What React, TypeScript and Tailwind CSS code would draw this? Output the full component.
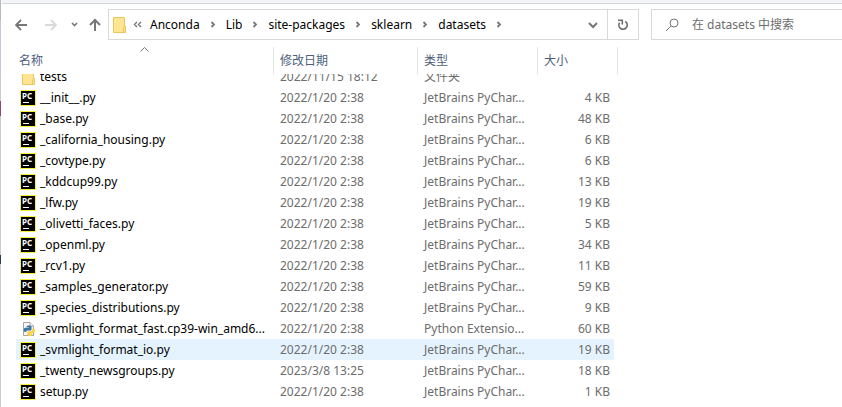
import React from "react";

type FileRow = { name: string; date: string; type: string; size: string; kind: "pc" | "py" };

const PC = "JetBrains PyChar...";
const D = "2022/1/20 2:38";

const rows: FileRow[] = [
  { name: "__init__.py", date: D, type: PC, size: "4 KB", kind: "pc" },
  { name: "_base.py", date: D, type: PC, size: "48 KB", kind: "pc" },
  { name: "_california_housing.py", date: D, type: PC, size: "6 KB", kind: "pc" },
  { name: "_covtype.py", date: D, type: PC, size: "6 KB", kind: "pc" },
  { name: "_kddcup99.py", date: D, type: PC, size: "13 KB", kind: "pc" },
  { name: "_lfw.py", date: D, type: PC, size: "19 KB", kind: "pc" },
  { name: "_olivetti_faces.py", date: D, type: PC, size: "5 KB", kind: "pc" },
  { name: "_openml.py", date: D, type: PC, size: "34 KB", kind: "pc" },
  { name: "_rcv1.py", date: D, type: PC, size: "11 KB", kind: "pc" },
  { name: "_samples_generator.py", date: D, type: PC, size: "59 KB", kind: "pc" },
  { name: "_species_distributions.py", date: D, type: PC, size: "9 KB", kind: "pc" },
  { name: "_svmlight_format_fast.cp39-win_amd6...", date: D, type: "Python Extensio...", size: "60 KB", kind: "py" },
  { name: "_svmlight_format_io.py", date: D, type: PC, size: "19 KB", kind: "pc" },
  { name: "_twenty_newsgroups.py", date: "2023/3/8 13:25", type: PC, size: "18 KB", kind: "pc" },
  { name: "setup.py", date: D, type: PC, size: "1 KB", kind: "pc" },
];

function PyCharmIcon() {
  return (
    <svg className="block shrink-0" width="16" height="16" viewBox="0 0 16 16" aria-hidden="true">
      <rect width="16" height="16" fill="#f4f03c" />
      <rect x="1" y="1" width="14" height="14" fill="#000" />
      <text x="2" y="8.6" fontSize="8" fontWeight="700" fill="#fff">PC</text>
      <path d="M3 12.5H9" stroke="#fff" strokeWidth="1" />
    </svg>
  );
}

function PythonFileIcon() {
  return (
    <svg className="block shrink-0" width="16" height="16" viewBox="0 0 16 16" aria-hidden="true">
      <path d="M3.5 1.5H10L13.5 5V14.5H3.5Z" fill="#f7f7f7" stroke="#a5a5a5" />
      <path d="M10 1.5V5H13.5" fill="#fff" stroke="#a5a5a5" />
      <path d="M6.5 5.6Q6.5 4.5 9 4.5T11.5 5.8V8.5Q11.5 9.5 10.5 9.5H7.5Q6 9.5 6 11H5Q3.8 11 3.8 8.8T5.5 6.8H9V6.3H6.5Z" fill="#3a76a8" />
      <path d="M12.2 7.5H13.5Q15 7.5 15 9.8T13.3 12H10V12.5H12.3V13.8Q12.3 15 9.8 15T7.2 13.6V11.3Q7.2 10.3 8.3 10.3H11Q12.2 10.3 12.2 9Z" fill="#fdd23e" />
    </svg>
  );
}

function FolderIcon() {
  return (
    <svg className="block shrink-0" width="14" height="16" viewBox="0 0 14 16" aria-hidden="true">
      <path d="M.5 .5H11.5V9.5H12.5V15.5H.5Z" fill="#ffe491" stroke="#eac45c" />
      <path d="M10.5 15V10.5L11.5 9.5" fill="none" stroke="#eac45c" />
    </svg>
  );
}

function Crumb({ label }: { label: string }) {
  return (
    <li className="flex items-center">
      <a href="#" className="text-black">{label}</a>
      <svg className="ml-[9px] mr-2 block" width="9" height="9" viewBox="0 0 9 9" aria-hidden="true">
        <path d="M2.5 2L5 4.5L2.5 7" fill="none" stroke="#777" strokeWidth="1.8" />
      </svg>
    </li>
  );
}

/* Sliver of the window behind, visible along the left edge. */
function BackgroundEdge() {
  return (
    <div className="flex w-px shrink-0 flex-col bg-[#cbcbcd]" aria-hidden="true">
      <div className="h-5 bg-[#b9b9bc]" />
      <div className="h-[54px] bg-[#c3c8da]" />
      <div className="h-[27px]" />
      <div className="h-[15px] bg-[#874a80]" />
      <div className="h-[139px]" />
      <div className="h-[9px] bg-[#2c3a4c]" />
    </div>
  );
}

export default function App() {
  return (
    <main className="flex min-h-screen overflow-hidden bg-white font-['Noto_Sans','Noto_Sans_CJK_SC',sans-serif] text-xs leading-[20px]">
      <BackgroundEdge />
      <div className="min-w-0 grow">
        <div className="ml-px h-1 border-b border-[#d5d6d9] bg-[#f3f4f7]" />
        <header className="flex items-center pt-[5px]">
          <nav className="flex w-[107px] shrink-0 items-center pl-[14px]" aria-label="导航">
            <button type="button" aria-label="后退">
              <svg className="block" width="12" height="12" viewBox="0 0 12 12"><path d="M12 6H1M6 1L1 6L6 11" fill="none" stroke="#777" strokeWidth="1.8" /></svg>
            </button>
            <button type="button" aria-label="前进" className="ml-[18px]">
              <svg className="block" width="12" height="12" viewBox="0 0 12 12"><path d="M0 6H11M6 1L11 6L6 11" fill="none" stroke="#d9d9d9" strokeWidth="1.8" /></svg>
            </button>
            <button type="button" aria-label="最近浏览的位置" className="ml-[14px]">
              <svg className="block" width="7" height="7" viewBox="0 0 7 7"><path d="M1 2L3.5 4.5L6 2" fill="none" stroke="#777" strokeWidth="1.6" /></svg>
            </button>
            <button type="button" aria-label="上移" className="ml-[11px]">
              <svg className="block" width="12" height="14" viewBox="0 0 12 14"><path d="M6 13V2M1 7L6 2L11 7" fill="none" stroke="#777" strokeWidth="2" /></svg>
            </button>
          </nav>
          <div className="flex h-[31px] grow items-center border border-[#d9d9d9] pl-1">
            <FolderIcon />
            <svg className="ml-1.5 mr-2 block" width="9" height="9" viewBox="0 0 9 9" aria-hidden="true">
              <path d="M4 2L1.5 4.5L4 7M8 2L5.500 4.5L8 7" fill="none" stroke="#777" strokeWidth="1.4" />
            </svg>
            <ol className="flex grow items-center">
              <Crumb label="Anconda" />
              <Crumb label="Lib" />
              <Crumb label="site-packages" />
              <Crumb label="sklearn" />
              <Crumb label="datasets" />
            </ol>
            <button type="button" aria-label="以前的位置" className="flex h-full w-[29px] items-center justify-center border-r border-[#d9d9d9]">
              <svg className="block" width="10" height="8" viewBox="0 0 10 8"><path d="M1 2L5 6L9 2" fill="none" stroke="#777" strokeWidth="2" /></svg>
            </button>
            <button type="button" aria-label="刷新" className="flex h-full w-[30px] items-center justify-center">
              <svg className="block" width="12" height="12" viewBox="0 0 12 12"><path d="M8.2 2.4A4.200 4.200 0 1 1 2.600 3.600M1 1.300H5.300V5.500" fill="none" stroke="#6e6e6e" strokeWidth="1.6" /></svg>
            </button>
          </div>
          <label className="ml-3 flex h-[31px] w-[191px] shrink-0 items-center border border-r-0 border-[#d9d9d9] pl-[13px]">
            <svg className="block shrink-0" width="14" height="14" viewBox="0 0 14 14" aria-hidden="true">
              <circle cx="9" cy="5" r="4" fill="none" stroke="#777" />
              <path d="M6 8L1 13" stroke="#777" />
            </svg>
            <input type="text" aria-label="搜索" placeholder="在 datasets 中搜索" className="ml-[13px] w-full min-w-0 outline-none placeholder:text-[#6d6d6d]" />
          </label>
        </header>
        <table className="ml-[15px] mt-[7px] w-[602px] table-fixed border-separate border-spacing-0 text-left text-[#6d6d6d]">
          <colgroup>
            <col className="w-[258px]" />
            <col className="w-[144px]" />
            <col className="w-[120px]" />
            <col className="w-[80px]" />
          </colgroup>
          <thead className="text-[#4c607a]">
            <tr className="h-[27px]">
              <th className="border-r border-[#e5e5e5] p-0 align-top font-normal">
                <svg className="mx-auto block" width="9" height="5" viewBox="0 0 9 5" aria-hidden="true"><path d="M.5 4.5L4.5 .5L8.5 4.5" fill="none" stroke="#777" /></svg>
                <div className="pl-[3px] leading-[18px]">名称</div>
              </th>
              <th className="border-r border-[#e5e5e5] p-0 pl-1.5 font-normal">修改日期</th>
              <th className="border-r border-[#e5e5e5] p-0 pl-1.5 font-normal">类型</th>
              <th className="border-r border-[#e5e5e5] p-0 pl-1.5 font-normal">大小</th>
            </tr>
          </thead>
          <tbody>
            <tr>
              <td className="p-0 pl-1.5">
                <div className="flex h-[13px] items-end overflow-hidden text-black">
                  <div className="flex h-[21px] items-center gap-1"><FolderIcon />tests</div>
                </div>
              </td>
              <td className="p-0 pl-1.5"><div className="flex h-[13px] items-end overflow-hidden">2022/11/15 18:12</div></td>
              <td className="p-0 pl-1.5"><div className="flex h-[13px] items-end overflow-hidden">文件夹</div></td>
              <td className="p-0" />
            </tr>
            {rows.map((r) => (
              <tr key={r.name} className={r.name === "_svmlight_format_io.py" ? "h-[21px] *:bg-[#e5f3ff]" : "h-[21px]"}>
                <td className="p-0 pl-1">
                  <div className="flex items-center gap-1 whitespace-nowrap text-black">
                    {r.kind === "pc" ? <PyCharmIcon /> : <PythonFileIcon />}
                    {r.name}
                  </div>
                </td>
                <td className="p-0 pl-1.5 whitespace-nowrap">{r.date}</td>
                <td className="p-0 pl-1.5 whitespace-nowrap">{r.type}</td>
                <td className="border-r-4 border-white p-0 pr-1 text-right whitespace-nowrap">{r.size}</td>
              </tr>
            ))}
          </tbody>
        </table>
      </div>
    </main>
  );
}
